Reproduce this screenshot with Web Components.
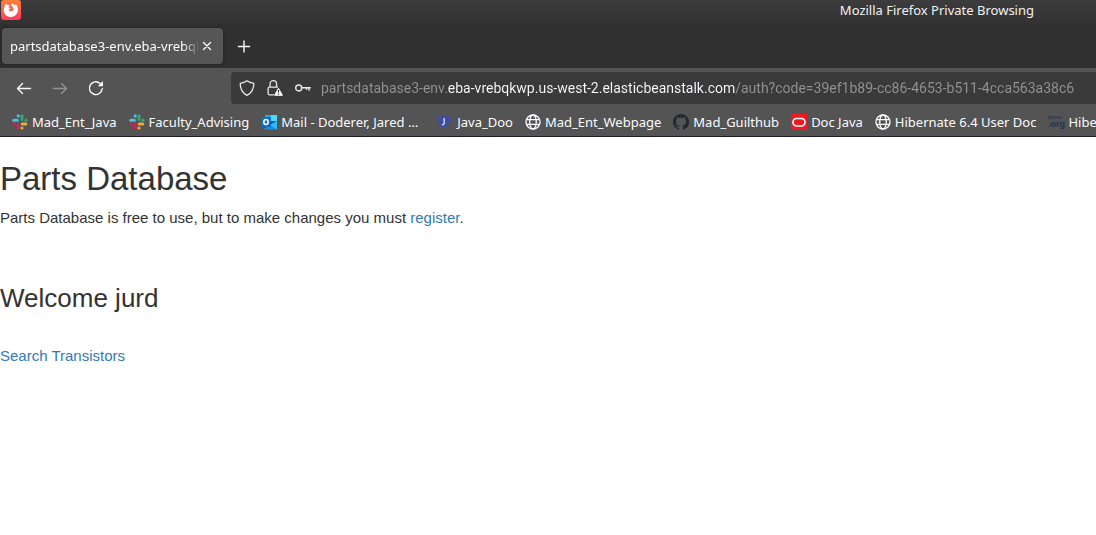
<!DOCTYPE html>
<html lang="en">
<head>
<meta charset="utf-8">
<title>Mozilla Firefox Private Browsing</title>
<style>
  body { margin: 0; background: #fff; font-family: "Noto Sans", "Open Sans", sans-serif; overflow-x: hidden; }
</style>
</head>
<body>
<browser-window></browser-window>

<script>
const slack = `<svg viewBox="0 0 16 16"><g fill="none" stroke-linecap="round" stroke-width="3"><path stroke="#4bbfe0" d="M1.8 6.2h3.6"/><path stroke="#35a672" d="M10 1.8v3.6"/><path stroke="#e6ad35" d="M10.2 10h3.6"/><path stroke="#d1215a" d="M6.2 10.6v3.6"/></g><circle cx="6.2" cy="1.9" r="1.6" fill="#4bbfe0"/><circle cx="14" cy="6.2" r="1.6" fill="#35a672"/><circle cx="10" cy="14" r="1.6" fill="#e6ad35"/><circle cx="2" cy="10" r="1.6" fill="#d1215a"/></svg>`;
const globe = `<svg viewBox="0 0 16 16"><g fill="none" stroke="#fbfbfe" stroke-width="1.3"><circle cx="8" cy="8" r="7"/><ellipse cx="8" cy="8" rx="3.3" ry="7"/><path d="M1.4 5.6h13.2M1.4 10.4h13.2"/></g></svg>`;
const icons = {
  slack, globe,
  firefox: `<svg viewBox="0 0 20 20"><defs><linearGradient id="g" x2="0" y2="1"><stop stop-color="#ff8038"/><stop offset="1" stop-color="#ff3c62"/></linearGradient></defs><rect width="20" height="20" rx="3" fill="url(#g)"/><path fill="#fff" d="M5 3.600c.4.900 1 1.300 1.900 1.500 1-.2 1.800.1 2.500.6-1.500.2-1.900.8-2 1.500.5.6 1.200.7 2.100.7-.2.8-1 1.100-1.600 1.500.2 1.300 1.200 2 2.400 1.900 1.600-.1 2.500-1.300 2.300-2.800-.2-1.200-1.200-1.800-1.900-2.700-.6-.9-.4-1.900.2-2.700 1.200 1.200 2.200 1.300 2.900 2.300l.8-1.300c4.600 4.300 2.200 12.900-4.600 12.900C3.900 17 1.600 11.600 3.300 7.300 3.600 5.900 4.300 4.700 5 3.600z"/></svg>`,
  close: `<svg viewBox="0 0 16 16"><path fill="none" stroke="#fbfbfe" stroke-width="1.4" stroke-linecap="round" d="M4.500 4.500l7 7m0-7l-7 7"/></svg>`,
  plus: `<svg viewBox="0 0 16 16"><path fill="none" stroke="#fbfbfe" stroke-width="1.400" stroke-linecap="round" d="M2.500 8.500h11M8 3v11"/></svg>`,
  back: `<svg viewBox="0 0 16 16"><path fill="none" stroke="#fbfbfe" stroke-width="1.400" stroke-linecap="round" stroke-linejoin="round" d="M14.500 8.500h-13m5-5l-5 5 5 5"/></svg>`,
  forward: `<svg viewBox="0 0 16 16"><path fill="none" stroke="#929292" stroke-width="1.400" stroke-linecap="round" stroke-linejoin="round" d="M1.500 8.500h13m-5-5l5 5-5 5"/></svg>`,
  reload: `<svg viewBox="0 0 16 16"><path fill="none" stroke="#fbfbfe" stroke-width="1.400" stroke-linecap="round" d="M14.200 8.800a6.400 6.400 0 1 1-2-5.300"/><path fill="#fbfbfe" d="M15 1v5.300H9.800z"/></svg>`,
  shield: `<svg viewBox="0 0 16 16"><path fill="none" stroke="#e8e8ea" stroke-width="1.300" stroke-linejoin="round" d="M8 .8c2 1.500 4.300 2.200 6.800 2.500C14.900 8.800 12.500 13 8 15.400 3.500 13 1.100 8.800 1.200 3.300 3.700 3 6 2.300 8 .8z"/></svg>`,
  lock: `<svg viewBox="0 0 16 16"><path fill="none" stroke="#e8e8ea" stroke-width="1.300" stroke-linecap="round" d="M6.500 14.800H2.500a1.400 1.400 0 0 1-1.400-1.400V8.500a1.400 1.400 0 0 1 1.400-1.400h8M3 7V4a3.300 3.300 0 0 1 6.600 0v3"/><path fill="#fbfbfe" stroke="#fbfbfe" stroke-linejoin="round" d="M11.500 8.300l3.900 7H7.600z"/><path stroke="#3a3a3a" stroke-width="1.200" d="M11.500 9.800v2.800m0 .9v1.200"/></svg>`,
  key: `<svg viewBox="0 0 16 16"><g fill="none" stroke="#e8e8ea" stroke-width="1.400" stroke-linecap="round"><circle cx="3.700" cy="8" r="3"/><path d="M7 7.700h8.300M14 8v2.200M11.500 8v1.200"/></g></svg>`,
  outlook: `<svg viewBox="0 0 16 16"><path fill="#0a5ea8" d="M4 1h12v14H4z"/><path fill="#28a8ea" d="M4 1h6v6H4z"/><path fill="#50d9ff" d="M10 1h6v6h-6z"/><path fill="#1490df" d="M3 15l13-8v8.500H3z"/><path fill="#35b8f1" d="M16 7v8.500L9 11z"/><rect y="3" width="10" height="10" rx="1" fill="#0f6cc4"/><ellipse cx="5" cy="8" rx="2.200" ry="2.500" fill="none" stroke="#fff" stroke-width="1.500"/></svg>`,
  java: `<svg viewBox="0 0 16 16"><path fill="#3f4c9b" fill-rule="evenodd" d="M1 2.500C4 1.500 9 1.500 12 2.500V4c2-.3 3.500.3 3.500 1.600C15.500 7.500 13.500 9 11.500 9.500 10.500 12 9.500 13.500 6.500 13.500 2.500 13.500 0 9 1 2.500zM12.200 5.200v2.200c1-.4 1.800-1 1.800-1.600s-.8-.8-1.800-.6z"/><path fill="none" stroke="#c9cdf0" stroke-width="1.500" d="M7.200 4v5c0 1.600-1.200 1.900-2.300 1.400"/></svg>`,
  github: `<svg viewBox="0 0 16 16"><path fill="#24292e" fill-rule="evenodd" d="M8 0C3.580 0 0 3.580 0 8c0 3.540 2.290 6.530 5.470 7.590.4.070.55-.17.55-.38 0-.19-.01-.82-.01-1.490-2.010.37-2.530-.49-2.690-.94-.09-.23-.48-.94-.82-1.130-.28-.15-.68-.52-.01-.53.63-.01 1.080.58 1.230.82.72 1.210 1.870.87 2.330.66.07-.52.28-.87.51-1.070-1.780-.2-3.640-.89-3.640-3.950 0-.87.31-1.590.82-2.150-.08-.2-.36-1.020.08-2.120 0 0 .67-.21 2.200.82.64-.18 1.320-.27 2-.27s1.360.09 2 .27c1.530-1.040 2.200-.82 2.200-.82.44 1.100.16 1.920.08 2.120.51.56.82 1.270.82 2.150 0 3.070-1.870 3.750-3.650 3.950.29.25.54.73.54 1.480 0 1.070-.01 1.930-.01 2.200 0 .21.15.46.55.38A8 8 0 0 0 16 8c0-4.420-3.580-8-8-8z"/></svg>`,
  oracle: `<svg viewBox="0 0 16 16"><path fill="#ed1c24" d="M0 0h16v16H0z"/><rect x="2" y="4.500" width="12" height="7.500" rx="3.700" fill="none" stroke="#fff" stroke-width="1.700"/></svg>`,
  jboss: `<svg viewBox="0 0 16 16"><g fill="#1f3350" font-family="Liberation Sans, sans-serif"><text x="0" y="5" font-size="6">jboss</text><text x="0" y="13" font-size="9" font-weight="700">.org</text></g></svg>`
};

function component(name, css, html, setup) {
  customElements.define(name, class extends HTMLElement {
    constructor() {
      super();
      this.attachShadow({ mode: "open" }).innerHTML = `<style>${css}</style>${html}`;
    }
    connectedCallback() { if (setup) setup(this, this.shadowRoot); }
  });
}

const buttonCss = `button { border: 0; padding: 0; background: none; color: inherit; font: inherit; display: grid; place-items: center; }`;

component("ui-icon", `:host { display: block; flex: none; width: 16px; height: 16px; } svg { display: block; width: 100%; height: 100%; overflow: visible; }`,
  ``, (host, root) => { if (!root.querySelector("svg")) root.innerHTML += icons[host.getAttribute("name")]; });

component("title-bar", `
  :host { display: flex; align-items: flex-start; justify-content: space-between; height: 24px; padding: 0 62px 0 1px; background: linear-gradient(#3c3c3c, #323232); color: #f2f2f2; font-size: 13px; line-height: 20px; }
  ui-icon { width: 20px; height: 20px; }`,
  `<ui-icon name="firefox"></ui-icon><span><slot></slot></span>`);

component("browser-tab", `
  :host { display: flex; align-items: center; box-sizing: border-box; width: 221px; height: 36px; padding: 0 8px; border-radius: 4px; background: #565656; box-shadow: 0 0 3px #1c1c1c; color: #fbfbfe; font-size: 13px; }
  span { flex: 1; min-width: 0; overflow: hidden; white-space: nowrap; mask-image: linear-gradient(to left, transparent, #000 16px); }
  ${buttonCss}`,
  `<span><slot></slot></span><button aria-label="Close tab"><ui-icon name="close"></ui-icon></button>`);

component("tab-strip", `
  :host { display: flex; align-items: center; gap: 13px; height: 44px; padding-left: 2px; background: #303030; }
  ${buttonCss}`,
  `<slot></slot><button aria-label="New tab"><ui-icon name="plus"></ui-icon></button>`);

component("address-bar", `
  :host { display: flex; align-items: center; flex: 1; min-width: 0; height: 32px; padding-left: 8px; border-radius: 4px 0 0 4px; background: #3a3a3a; gap: 12px; }
  ${buttonCss}
  input { flex: 1; min-width: 0; height: 32px; padding: 0; margin-left: -2px; border: 0; outline: 0; font: 14px Roboto, sans-serif; color: #929292; background-clip: text; -webkit-background-clip: text; -webkit-text-fill-color: transparent; }`,
  `<button aria-label="Tracking protection"><ui-icon name="shield"></ui-icon></button>
   <button aria-label="Connection not secure"><ui-icon name="lock"></ui-icon></button>
   <button aria-label="Saved password"><ui-icon name="key"></ui-icon></button>
   <input type="text" aria-label="Address">`,
  (host, root) => {
    const input = root.querySelector("input");
    const parts = ["before", "domain", "after"].map(n => host.getAttribute(n));
    input.value = parts.join("");
    // The registered domain is drawn brighter than the rest of the address.
    const pen = document.createElement("canvas").getContext("2d");
    pen.font = '14px Roboto, sans-serif';
    const start = pen.measureText(parts[0]).width;
    const end = pen.measureText(parts[0] + parts[1]).width;
    input.style.backgroundImage = `linear-gradient(90deg, #929292 ${start}px, #fbfbfe ${start}px ${end}px, #929292 ${end}px)`;
  });

component("nav-bar", `
  :host { display: flex; align-items: center; height: 40px; padding-left: 16px; background: #545454; }
  nav { display: flex; gap: 20px; margin-right: 127px; }
  ${buttonCss}`,
  `<nav aria-label="History"><button aria-label="Back"><ui-icon name="back"></ui-icon></button>
   <button aria-label="Forward" disabled><ui-icon name="forward"></ui-icon></button>
   <button aria-label="Reload"><ui-icon name="reload"></ui-icon></button></nav><slot></slot>`);

component("book-mark", `
  :host { display: block; flex: none; }
  :host([truncated]) span { width: 144px; }
  a { display: flex; align-items: center; gap: 4px; color: #fbfbfe; text-decoration: none; font-size: 13px; line-height: 20px; white-space: nowrap; }`,
  `<a href="#"><ui-icon></ui-icon><span><slot></slot></span></a>`,
  (host, root) => {
    const icon = document.createElement("ui-icon");
    icon.setAttribute("name", host.getAttribute("icon"));
    root.querySelector("ui-icon").replaceWith(icon);
  });

component("bookmarks-bar", `
  :host { display: flex; align-items: center; gap: 12px; height: 28px; padding-left: 12px; overflow: hidden; background: #545454; border-bottom: 1px solid #1c1b22; }`,
  `<slot></slot>`);

component("parts-page", `
  :host { display: block; color: #333; font: 15px/21px "Liberation Sans", Arial, sans-serif; }
  h1, h2 { font-weight: 400; line-height: 36px; }
  h1 { margin: 24px 0 10px; font-size: 33px; }
  h2 { margin: 0 0 29px; font-size: 26px; }
  p { margin: 0 0 52px; }
  a { color: #337ab7; text-decoration: none; }`,
  `<h1>Parts Database</h1>
   <p>Parts Database is free to use, but to make changes you must <a href="#">register</a>.</p>
   <h2>Welcome jurd</h2>
   <a href="#">Search Transistors</a>`);

component("browser-window", `:host { display: block; }`,
  `<title-bar>Mozilla Firefox Private Browsing</title-bar>
   <tab-strip><browser-tab>partsdatabase3-env.eba-vrebqkwp</browser-tab></tab-strip>
   <nav-bar><address-bar before="partsdatabase3-env." domain="eba-vrebqkwp.us-west-2.elasticbeanstalk.com" after="/auth?code=39ef1b89-cc86-4653-b511-4cca563a38c6"></address-bar></nav-bar>
   <bookmarks-bar>
     <book-mark icon="slack">Mad_Ent_Java</book-mark>
     <book-mark icon="slack">Faculty_Advising</book-mark>
     <book-mark icon="outlook" truncated>Mail - Doderer, Jared …</book-mark>
     <book-mark icon="java">Java_Doo</book-mark>
     <book-mark icon="globe">Mad_Ent_Webpage</book-mark>
     <book-mark icon="github">Mad_Guilthub</book-mark>
     <book-mark icon="oracle">Doc Java</book-mark>
     <book-mark icon="globe">Hibernate 6.4 User Doc</book-mark>
     <book-mark icon="jboss">Hibe</book-mark>
   </bookmarks-bar>
   <parts-page></parts-page>`);
</script>
</body>
</html>
